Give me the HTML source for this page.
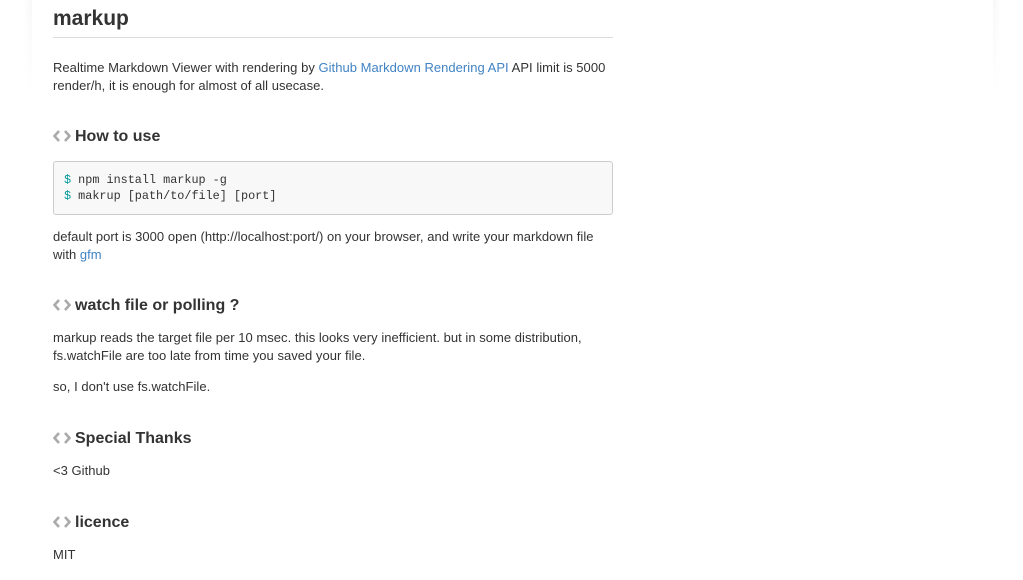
<!DOCTYPE html>
<html><head><meta charset="utf-8"><style>
body{margin:0;width:1023px;height:580px;background:#fff;position:relative;overflow:hidden;font-family:"Liberation Sans",Arial,sans-serif;color:#333}
.t{position:absolute;left:53px;white-space:nowrap}
.p{font-size:13px;line-height:18px;letter-spacing:0.03px}
.h2{font-size:16px;font-weight:bold;line-height:20px}
.h2 svg{vertical-align:-1px;margin-right:4px}
a{color:#4183c4;text-decoration:none}
.sh{position:absolute;top:0;width:8px;height:95px}
</style></head><body>
<div class="sh" style="left:24px;background:linear-gradient(to right,rgba(0,0,0,0),rgba(0,0,0,0.03));-webkit-mask:linear-gradient(#000,transparent)"></div>
<div class="sh" style="left:993px;background:linear-gradient(to left,rgba(0,0,0,0),rgba(0,0,0,0.03));-webkit-mask:linear-gradient(#000,transparent)"></div>
<div class="t" style="top:6px;font-size:21px;font-weight:bold;line-height:26px">markup</div>
<div style="position:absolute;left:53px;top:37px;width:560px;height:1px;background:#ddd"></div>
<div class="t p" style="top:59px">Realtime Markdown Viewer with rendering by <a>Github Markdown Rendering API</a> API limit is 5000<br>render/h, it is enough for almost of all usecase.</div>
<div class="t h2" style="top:127px"><svg width="18" height="12" viewBox="0 0 18 12"><path d="M6 1L1.5 6L6 11M12 1L16.5 6L12 11" fill="none" stroke="#aaa" stroke-width="2.6"/></svg>How to use</div>
<div style="position:absolute;left:53px;top:161px;width:558px;height:52px;border:1px solid #ccc;border-radius:3px;background:#f8f8f8"></div>
<div class="t" style="left:64px;top:172px;font-family:'Liberation Mono',monospace;font-size:11.8px;line-height:16px"><span style="color:#099">$</span> npm install markup -g<br><span style="color:#099">$</span> makrup [path/to/file] [port]</div>
<div class="t p" style="top:228px">default port is 3000 open (http://localhost:port/) on your browser, and write your markdown file<br>with <a>gfm</a></div>
<div class="t h2" style="top:296px"><svg width="18" height="12" viewBox="0 0 18 12"><path d="M6 1L1.5 6L6 11M12 1L16.5 6L12 11" fill="none" stroke="#aaa" stroke-width="2.6"/></svg>watch file or polling ?</div>
<div class="t p" style="top:329px">markup reads the target file per 10 msec. this looks very inefficient. but in some distribution,<br>fs.watchFile are too late from time you saved your file.</div>
<div class="t p" style="top:378px">so, I don't use fs.watchFile.</div>
<div class="t h2" style="top:429px"><svg width="18" height="12" viewBox="0 0 18 12"><path d="M6 1L1.5 6L6 11M12 1L16.5 6L12 11" fill="none" stroke="#aaa" stroke-width="2.6"/></svg>Special Thanks</div>
<div class="t p" style="top:462px">&lt;3 Github</div>
<div class="t h2" style="top:513px"><svg width="18" height="12" viewBox="0 0 18 12"><path d="M6 1L1.5 6L6 11M12 1L16.5 6L12 11" fill="none" stroke="#aaa" stroke-width="2.6"/></svg>licence</div>
<div class="t p" style="top:546px">MIT</div>
</body></html>
